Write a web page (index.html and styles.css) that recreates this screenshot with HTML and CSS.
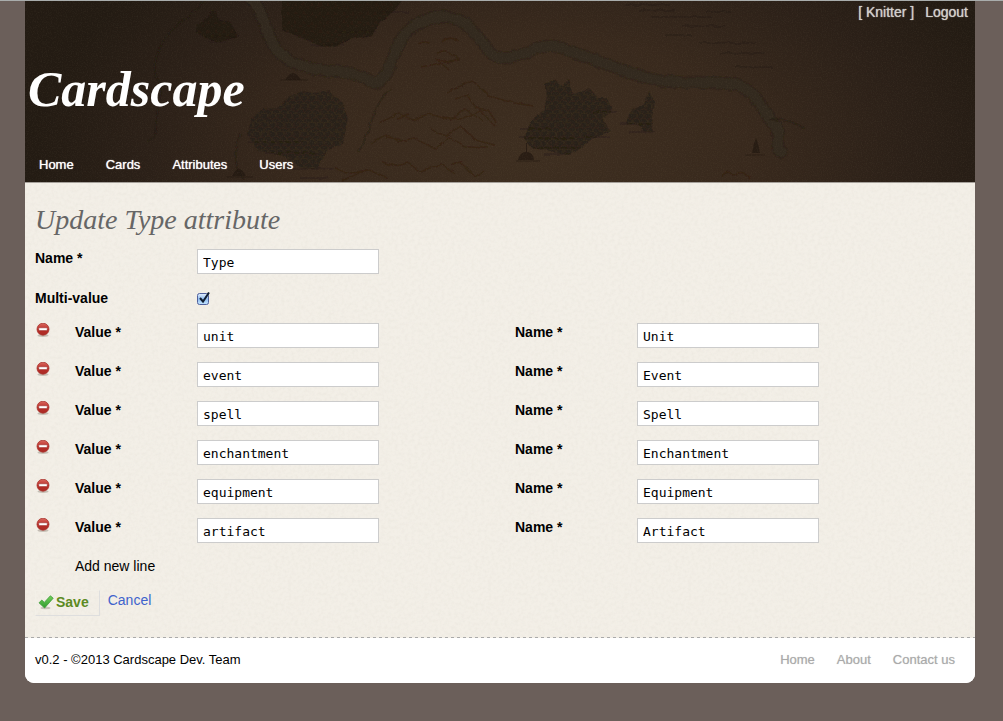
FILE: index.html
```html
<!DOCTYPE html>
<html lang="en">
<head>
<meta charset="utf-8">
<title>Cardscape - Update Type attribute</title>
<link rel="stylesheet" href="styles.css">
</head>
<body>
<svg class="defs" aria-hidden="true">
  <defs>
    <symbol id="remove" viewBox="0 0 16 16">
      <linearGradient id="red" x1="0" y1="0" x2="0" y2="1">
        <stop offset="0" stop-color="#d8685f"/><stop offset=".5" stop-color="#bd2f29"/><stop offset="1" stop-color="#a82a24"/>
      </linearGradient>
      <ellipse cx="8" cy="12.6" rx="5.5" ry="1.4" fill="#8d8578" opacity=".45"/>
      <circle cx="8" cy="6.2" r="6" fill="url(#red)" stroke="#a8342d" stroke-width=".8"/>
      <rect x="3.8" y="4.8" width="8.4" height="2.8" rx=".5" fill="#fff" stroke="#8f2520" stroke-width=".5"/>
    </symbol>
  </defs>
</svg>
<div class="page">
  <header class="header">
    <svg class="map" viewBox="25 1 950 181" preserveAspectRatio="xMidYMid slice" aria-hidden="true">
      <defs>
        <pattern id="trees" width="8" height="9" patternUnits="userSpaceOnUse">
          <rect width="8" height="9" fill="#271e16"/>
          <path d="M0 6Q0 1 4 1T8 6M-4 9Q-4 5 0 5T4 9M4 9Q4 5 8 5T12 9M3 4v2M6 7v2" fill="none" stroke="#30261c" stroke-width="1"/>
        </pattern>
        <pattern id="darktrees" width="8" height="9" patternUnits="userSpaceOnUse">
          <rect width="8" height="9" fill="#1e160f"/>
          <path d="M0 6Q0 1 4 1T8 6M-4 9Q-4 5 0 5T4 9M4 9Q4 5 8 5T12 9" fill="none" stroke="#261d14" stroke-width="1"/>
        </pattern>
        <filter id="grain" x="0" y="0" width="100%" height="100%">
          <feTurbulence type="fractalNoise" baseFrequency=".8" numOctaves="2" seed="4"/>
          <feColorMatrix values="0 0 0 0 .5  0 0 0 0 .4  0 0 0 0 .25  1.2 0 0 0 -.5"/>
        </filter>
        <filter id="rough" filterUnits="userSpaceOnUse" x="25" y="-10" width="950" height="210"><feTurbulence type="fractalNoise" baseFrequency=".12" numOctaves="2" seed="9" result="n"/><feDisplacementMap in="SourceGraphic" in2="n" xChannelSelector="R" yChannelSelector="G" scale="4"/></filter>
      </defs>
      <g filter="url(#rough)">
        <g fill="none" stroke-linecap="round">
          <path d="M248 -4C268 8 262 48 292 62S346 66 368 80S390 50 405 34S450 8 470 28S488 58 506 58S540 40 562 48S610 66 640 76S705 80 732 84S764 116 774 124S772 148 782 152" stroke="#241d14" stroke-width="13" opacity=".4"/>
          <path d="M248 -4C268 8 262 48 292 62S346 66 368 80S390 50 405 34S450 8 470 28S488 58 506 58S540 40 562 48S610 66 640 76S705 80 732 84S764 116 774 124S772 148 782 152" stroke="#32291d" stroke-width="10" opacity=".8"/>
          <path d="M205 2C184 22 166 28 157 55S167 75 159 105S162 132 148 141M390 90C370 106 372 135 358 151M240 135Q230 160 244 180M770 119Q792 119 803 128" stroke="#1f1710" stroke-width="2" opacity=".35"/>
        </g>
        <g fill="url(#darktrees)" opacity=".8">
          <path d="M282 0H404L394 10L380 22L372 35L348 40L336 48L316 44L300 37L282 30Z"/>
          <path d="M196 25L207 18L213 9L220 20L230 22L238 36L218 43L198 34Z"/>
        </g>
        <g fill="url(#trees)" opacity=".85">
          <path d="M247 134L252 117L262 109L277 108L290 96L303 91L316 94L329 90L341 101L348 118L343 144L328 149L318 169L301 168L280 154L258 151Z"/>
          <path d="M524 138L532 119L546 110L545 84L553 80L564 86L568 79L573 94L590 89L598 98L607 98L612 110L603 119L610 132L592 139L581 147L568 155L549 151L532 148Z"/>
          <path d="M626 125L632 109L643 104L649 91L655 103L651 122L654 132L643 131L638 123Z"/>
        </g>
        <g fill="none" stroke="#251b12" stroke-width="1" opacity=".8">
          <path d="M520 129h30M519 138h54M533 148h45M544 154h27M591 112h25M584 137h26M620 124h32M630 132h26M248 142h55M265 153h52M290 169h44M301 178h27M200 36h36M208 42h18M310 45h35M338 32h38M378 12h30"/>
        </g>
        <g fill="none" stroke="#2c170f" stroke-width="1.4" opacity=".4">
          <path d="M418 44q7-4 12 0M442 42q8-7 17-1M421 67l20-4 8 7M437 53q9-6 22 6l-11 4-12-4M379 124l20-11 13 7 16-6 23 6 14-11 18 12M397 119l12-5M447 93l25-13 17 16 25 7 20 3M455 99l13-4 8 13 12 2 8 12M371 144l15-10 12 8 16-4 21 11 14-12 16 9 23 1M386 137l16 3M430 128l15 8 16-10 14 14 20 5M442 117l18 2 21-8 14 15M381 162l15 4 11-3 14 8 20-7 14 10M451 164l10-2 14 15 8-6M335 169l16 4 18-3M342 181l25-12 21 9M721 176q9-7 12-1q10-6 17 3"/>
        </g>
        <g fill="none" stroke="#21150e" stroke-width="1" opacity=".25">
          <path d="M640 10h35M651 17h60M682 26h43M664 35h28M699 43h56M720 53h45M735 67h38M625 5h45M706 12h25"/>
        </g>
      </g>
      <g fill="#21170f" opacity=".7">
        <path d="M285 80q8-14 16 0zM232 176q7-14 14 0zM518 160q2-8 8-8v-9h1v9q6 0 7 8zM752 153q1-8 4-15q3 7 4 15z"/>
      </g>
      <path d="M280 80h28M226 177h27M516 161h24M745 155h20" stroke="#21170f" opacity=".6"/>
      <rect x="25" y="1" width="950" height="181" filter="url(#grain)" opacity=".12"/>
    </svg>
    <div class="account"><a href="#">[ Knitter ]</a><a href="#">Logout</a></div>
    <div class="logo">Cardscape</div>
    <nav class="nav"><a href="#">Home</a><a href="#">Cards</a><a href="#">Attributes</a><a href="#">Users</a></nav>
  </header>

  <main class="content">
    <h1 class="title">Update Type attribute</h1>
    <form>
      <div class="field">
        <label for="name">Name *</label>
        <input class="text" id="name" type="text" value="Type">
      </div>
      <div class="field check-field">
        <label for="multi">Multi-value</label>
        <input class="check" id="multi" type="checkbox" checked>
      </div>
      <div class="rows">
        <div class="row">
          <button class="remove" type="button" aria-label="Remove line"><svg><use href="#remove"/></svg></button>
          <label for="v1">Value *</label><input class="text" id="v1" type="text" value="unit">
          <label for="n1">Name *</label><input class="text" id="n1" type="text" value="Unit">
        </div>
        <div class="row">
          <button class="remove" type="button" aria-label="Remove line"><svg><use href="#remove"/></svg></button>
          <label for="v2">Value *</label><input class="text" id="v2" type="text" value="event">
          <label for="n2">Name *</label><input class="text" id="n2" type="text" value="Event">
        </div>
        <div class="row">
          <button class="remove" type="button" aria-label="Remove line"><svg><use href="#remove"/></svg></button>
          <label for="v3">Value *</label><input class="text" id="v3" type="text" value="spell">
          <label for="n3">Name *</label><input class="text" id="n3" type="text" value="Spell">
        </div>
        <div class="row">
          <button class="remove" type="button" aria-label="Remove line"><svg><use href="#remove"/></svg></button>
          <label for="v4">Value *</label><input class="text" id="v4" type="text" value="enchantment">
          <label for="n4">Name *</label><input class="text" id="n4" type="text" value="Enchantment">
        </div>
        <div class="row">
          <button class="remove" type="button" aria-label="Remove line"><svg><use href="#remove"/></svg></button>
          <label for="v5">Value *</label><input class="text" id="v5" type="text" value="equipment">
          <label for="n5">Name *</label><input class="text" id="n5" type="text" value="Equipment">
        </div>
        <div class="row">
          <button class="remove" type="button" aria-label="Remove line"><svg><use href="#remove"/></svg></button>
          <label for="v6">Value *</label><input class="text" id="v6" type="text" value="artifact">
          <label for="n6">Name *</label><input class="text" id="n6" type="text" value="Artifact">
        </div>
      </div>
      <button class="add" type="button">Add new line</button>
      <div class="actions">
        <button class="save" type="submit">
          <svg viewBox="0 0 16 16" aria-hidden="true">
            <linearGradient id="green" x1="0" y1="0" x2="0" y2="1"><stop offset="0" stop-color="#74d05c"/><stop offset="1" stop-color="#2d9a2c"/></linearGradient>
            <ellipse cx="7.5" cy="14" rx="5" ry="1.2" fill="#8d8578" opacity=".4"/>
            <path d="M1 8.8L3.8 6L6.3 8.4L12.4 1.8L15.2 4.2L6.6 14Z" fill="url(#green)" stroke="#3f9c3a" stroke-width=".8" stroke-linejoin="round"/>
          </svg>
          Save
        </button>
        <a class="cancel" href="#">Cancel</a>
      </div>
    </form>
  </main>

  <footer class="footer">
    <span>v0.2 - ©2013 Cardscape Dev. Team</span>
    <nav class="footer-nav"><a href="#">Home</a><a href="#">About</a><a href="#">Contact us</a></nav>
  </footer>
</div>
</body>
</html>
```
FILE: styles.css
```css
* {
  box-sizing: border-box;
}

body {
  margin: 0;
  padding: 0 28px 38px 25px;
  border-top: 1px solid #a9adac;
  background: #6b5f5a;
  color: #000;
  font: 14px/18px "Liberation Sans", Arial, sans-serif;
}

a {
  text-decoration: none;
}

button {
  padding: 0;
  border: 0;
  background: none;
  color: inherit;
  font: inherit;
  cursor: pointer;
}

.defs {
  position: absolute;
  width: 0;
  height: 0;
}

.page {
  overflow: hidden;
  border-radius: 0 0 9px 9px;
  background: #fff;
}

/* Header */
.header {
  position: relative;
  display: flex;
  flex-direction: column;
  border-bottom: 1px solid #a5a09a;
  background: radial-gradient(ellipse 52% 150% at 53% 85%, #3d2e20 0%, #38291d 45%, #2b2018 78%, #231b13 100%);
}

.map {
  position: absolute;
  inset: 0;
  width: 100%;
  height: 100%;
}

.account,
.logo,
.nav {
  position: relative;
}

.account {
  display: flex;
  justify-content: flex-end;
  gap: 11px;
  padding: 2px 7px 0 0;
}

.account a {
  color: #d2cfcb;
  text-shadow: 0 0 1px #d2cfcb;
}

.logo {
  padding: 36px 3px 0;
  color: #fff;
  font: italic bold 50px/64px "Liberation Serif", serif;
}

.nav {
  display: flex;
  gap: 32px;
  padding: 35px 14px 8px;
}

.nav a {
  color: #fff;
  font-size: 13px;
  text-shadow: 0 0 1px #fff;
}

/* Form */
.content {
  padding: 19px 20px 21px 10px;
  background: #f3efe7 url("data:image/svg+xml,%3Csvg xmlns='http://www.w3.org/2000/svg' width='200' height='200'%3E%3Cfilter id='n' x='0' y='0' width='100%25' height='100%25'%3E%3CfeTurbulence type='fractalNoise' baseFrequency='.3' numOctaves='3' stitchTiles='stitch'/%3E%3CfeColorMatrix values='0 0 0 0 .72 0 0 0 0 .69 0 0 0 0 .62 1 0 0 0 -.36'/%3E%3C/filter%3E%3Crect width='200' height='200' filter='url(%23n)' opacity='.45'/%3E%3C/svg%3E");
}

.title {
  margin: 0 0 12px;
  color: #666;
  font: italic 28px/35px "Liberation Serif", serif;
}

label {
  font-weight: bold;
}

.field {
  display: grid;
  grid-template-columns: 162px 1fr;
  align-items: start;
}

.check-field {
  align-items: center;
  margin: 15px 0 16px;
}

.text {
  width: 182px;
  height: 25px;
  padding: 1px 5px 0;
  border: 1px solid #ccc;
  background: #fff;
  color: #000;
  font: 13px "DejaVu Sans Mono", monospace;
}

.check {
  width: 14px;
  height: 15px;
  margin: 0;
  appearance: none;
  background: url("data:image/svg+xml,%3Csvg xmlns='http://www.w3.org/2000/svg' viewBox='0 0 14 15'%3E%3ClinearGradient id='b' x2='0' y2='1'%3E%3Cstop stop-color='%23e4effc'/%3E%3Cstop offset='.5' stop-color='%2392bdf0'/%3E%3Cstop offset='1' stop-color='%23c4e6ff'/%3E%3C/linearGradient%3E%3Crect x='.5' y='2.5' width='11' height='11' rx='2' fill='url(%23b)' stroke='%2350609c'/%3E%3Cpath d='M3 7l3 3.5L12 1.5' fill='none' stroke='%23101c30' stroke-width='2'/%3E%3C/svg%3E");
}

.rows {
  display: grid;
  gap: 14px;
}

.row {
  display: grid;
  grid-template-columns: 40px 122px 1fr 122px 1fr;
  align-items: start;
}

.remove {
  width: 16px;
  height: 16px;
}

.remove svg,
.save svg {
  display: block;
  width: 16px;
  height: 16px;
}

.add {
  display: block;
  margin: 14px 0 0 40px;
}

.actions {
  display: flex;
  align-items: flex-start;
  gap: 8px;
  margin-top: 15px;
}

.save {
  display: flex;
  align-items: center;
  gap: 2px;
  padding: 2px 10px 4px 2px;
  border: 1px solid;
  border-color: #f3f0e8 #dedede #dedede #f3f0e8;
  color: #5c8a22;
  font-weight: bold;
}

.cancel {
  padding-top: 1px;
  color: #4063cc;
}

/* Footer */
.footer {
  display: flex;
  align-items: center;
  justify-content: space-between;
  padding: 14px 20px 14px 10px;
  background: repeating-linear-gradient(90deg, #aaa 0 3px, #f3efe7 3px 6px) top / 100% 1px no-repeat #fff;
  font-size: 13px;
}

.footer-nav {
  display: flex;
  gap: 22px;
}

.footer-nav a {
  color: #aaa;
  text-shadow: 0 0 1px #ccc;
}
```
